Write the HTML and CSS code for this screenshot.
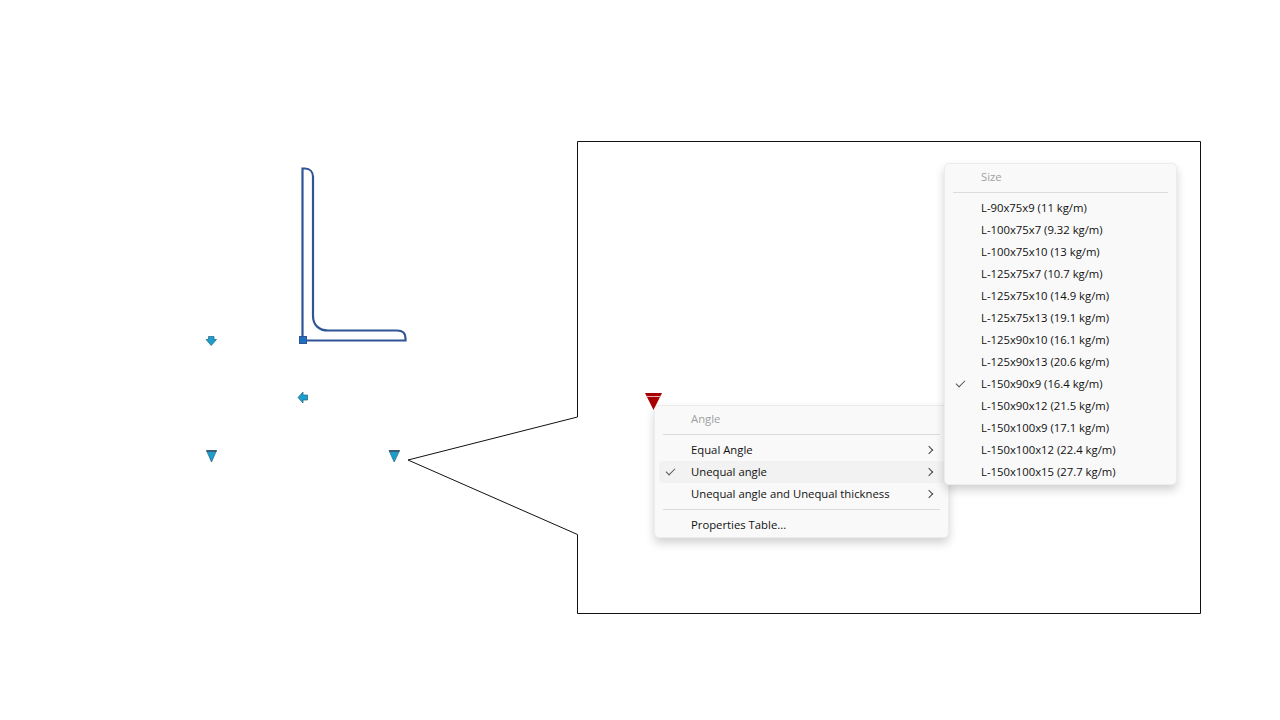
FILE: index.html
```html
<!DOCTYPE html>
<html>
<head>
<meta charset="utf-8">
<title>Angle section size menu</title>
<link rel="stylesheet" href="styles.css">
</head>

<body>

<div class="slide">

<!-- section outline, grips and the callout frame -->
<svg class="drawing" width="1280" height="720" viewBox="0 0 1280 720">
  <path class="callout" d="M577.5 141.500H1200.500V613.500H577.500V534.500L408 460L577.500 417Z"/>
  <path class="section" d="M302.500 340V168.500H305C310 168.500 313 172 313 177V316C313 325 319 330.500 328 330.500H397C402 330.500 405.500 333 405.500 338V340.500H302.500"/>
  <rect class="grip-base" x="299.500" y="336.500" width="7" height="7"/>
  <path class="grip" d="M208.500 336.500H214V339.500H216.500L211.200 345.500L206 339.500H208.500Z"/>
  <path class="grip" d="M298 397.500L303 392V395H307.500V400H303V403Z"/>
  <path class="grip" d="M206.500 450.500H216.500L211.500 462Z"/>
  <path class="grip-top" d="M206.500 451H216.500"/>
  <path class="grip" d="M389 450.500H399.500L394.200 462Z"/>
  <path class="grip-top" d="M389 451H399.500"/>
  <path class="grip-active" d="M645 393H662L653.500 410Z"/>
  <path class="grip-active-gap" d="M646 396.500H661"/>
</svg>

<div class="menu menu-type">
  <div class="menu-row is-title">Angle</div>
  <div class="menu-sep"></div>
  <div class="menu-row">Equal Angle<span class="chev"></span></div>
  <div class="menu-row is-hover"><span class="tick"></span>Unequal angle<span class="chev"></span></div>
  <div class="menu-row">Unequal angle and Unequal thickness<span class="chev"></span></div>
  <div class="menu-sep"></div>
  <div class="menu-row">Properties Table...</div>
</div>

<div class="menu menu-size">
  <div class="menu-row is-title">Size</div>
  <div class="menu-sep"></div>
  <div class="menu-row">L-90x75x9 (11 kg/m)</div>
  <div class="menu-row">L-100x75x7 (9.32 kg/m)</div>
  <div class="menu-row">L-100x75x10 (13 kg/m)</div>
  <div class="menu-row">L-125x75x7 (10.7 kg/m)</div>
  <div class="menu-row">L-125x75x10 (14.9 kg/m)</div>
  <div class="menu-row">L-125x75x13 (19.1 kg/m)</div>
  <div class="menu-row">L-125x90x10 (16.1 kg/m)</div>
  <div class="menu-row">L-125x90x13 (20.6 kg/m)</div>
  <div class="menu-row"><span class="tick"></span>L-150x90x9 (16.4 kg/m)</div>
  <div class="menu-row">L-150x90x12 (21.5 kg/m)</div>
  <div class="menu-row">L-150x100x9 (17.1 kg/m)</div>
  <div class="menu-row">L-150x100x12 (22.4 kg/m)</div>
  <div class="menu-row">L-150x100x15 (27.7 kg/m)</div>
</div>

</div>

</body>
</html>
```

FILE: styles.css
```css
* {
  margin: 0;
  padding: 0;
  box-sizing: border-box;
}

body {
  background-color: #fff;
  font-family: "Open Sans", "Noto Sans", sans-serif;
  font-size: 11.3px;
  color: #111;
  overflow: hidden;
}

.slide {
  position: relative;
  width: 1280px;
  height: 720px;
}

.drawing {
  display: block;
}

.callout {
  fill: none;
  stroke: #111;
  stroke-width: 1;
}

.section {
  fill: none;
  stroke: #2f5597;
  stroke-width: 2.2;
}

.grip-base {
  fill: #1f6fc0;
  stroke: #2f5597;
}

.grip {
  fill: #1c9fcc;
  stroke: #256a8a;
  stroke-width: 0.75;
}

.grip-top {
  fill: none;
  stroke: #3d5f75;
  stroke-width: 2;
}

.grip-active {
  fill: #a80000;
}

.grip-active-gap {
  fill: none;
  stroke: #e8b0b0;
  stroke-width: 1;
}

.menu {
  position: absolute;
  background-color: #f9f9f9;
  border: 1px solid #ececec;
  border-radius: 5px;
  padding: 2px 4px 1px;
  box-shadow: 0 5px 10px rgba(0, 0, 0, 0.18);
}

.menu-type {
  left: 654px;
  top: 405px;
  width: 295px;
}

.menu-size {
  left: 944px;
  top: 163px;
  width: 233px;
}

.menu-row {
  position: relative;
  height: 22px;
  line-height: 22px;
  padding-left: 32px;
  border-radius: 3px;
  white-space: nowrap;
}

.menu-row.is-title {
  color: #a0a0a0;
}

.menu-row.is-hover {
  background-color: #f2f2f2;
}

.menu-sep {
  height: 1px;
  margin: 4px 4px;
  background-color: #dcdcdc;
}

.chev {
  position: absolute;
  right: 12px;
  top: 8px;
  width: 6px;
  height: 6px;
  border-top: 1px solid #444;
  border-right: 1px solid #444;
  transform: rotate(45deg);
}

.tick {
  position: absolute;
  left: 7px;
  top: 7px;
  width: 9px;
  height: 5px;
  border-left: 1px solid #555;
  border-bottom: 1px solid #555;
  transform: rotate(-45deg);
}
```
